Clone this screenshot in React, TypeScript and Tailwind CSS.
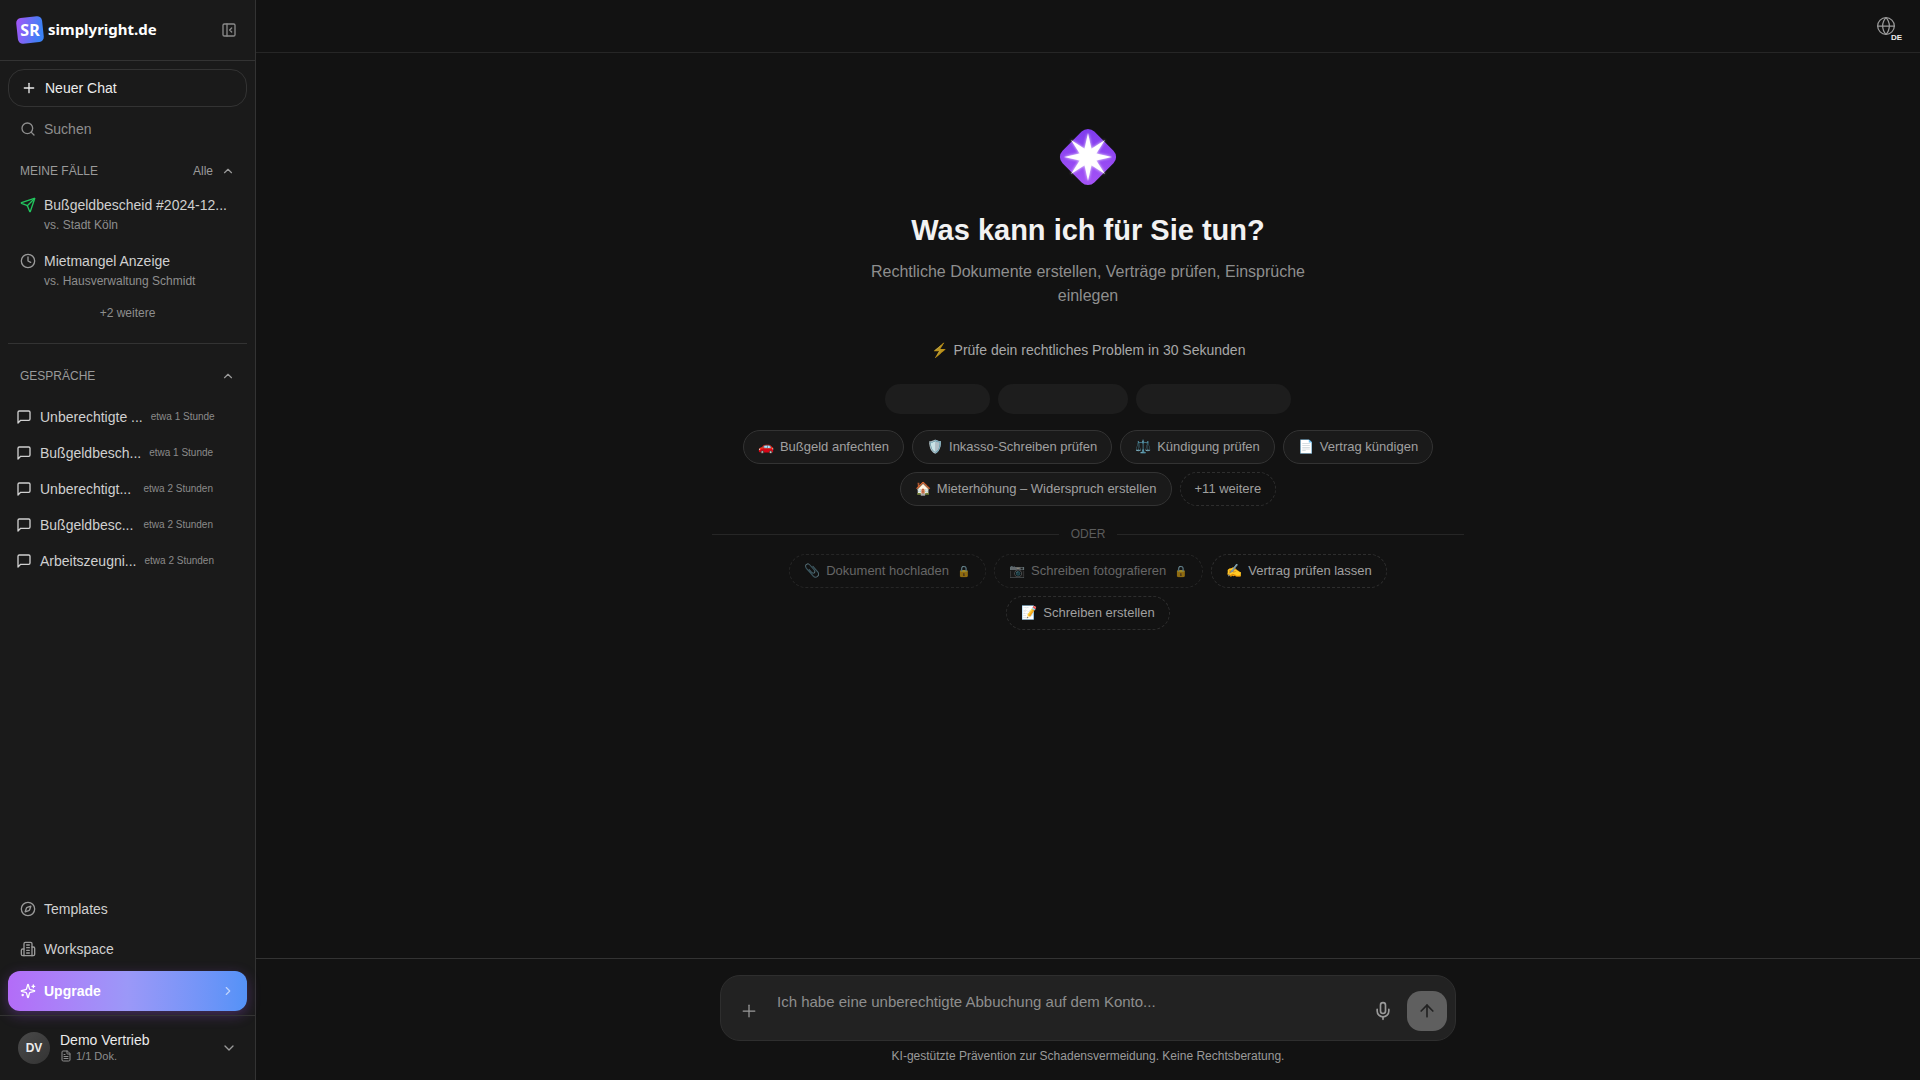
import React from 'react'
import {
  ArrowUp,
  ChevronDown,
  ChevronRight,
  ChevronUp,
  Clock,
  Compass,
  FileText,
  Globe,
  Mic,
  PanelLeftClose,
  Plus,
  Search,
  Send,
} from 'lucide-react'

const chats = [
  { title: 'Unberechtigte ...', time: 'etwa 1 Stunde' },
  { title: 'Bußgeldbesch...', time: 'etwa 1 Stunde' },
  { title: 'Unberechtigt...', time: 'etwa 2 Stunden' },
  { title: 'Bußgeldbesc...', time: 'etwa 2 Stunden' },
  { title: 'Arbeitszeugni...', time: 'etwa 2 Stunden' },
]

const topics = [
  { icon: '🚗', label: 'Bußgeld anfechten' },
  { icon: '🛡️', label: 'Inkasso-Schreiben prüfen' },
  { icon: '⚖️', label: 'Kündigung prüfen' },
  { icon: '📄', label: 'Vertrag kündigen' },
  { icon: '🏠', label: 'Mieterhöhung – Widerspruch erstellen' },
]

const actions = [
  { icon: '📎', label: 'Dokument hochladen', locked: true },
  { icon: '📷', label: 'Schreiben fotografieren', locked: true },
  { icon: '✍️', label: 'Vertrag prüfen lassen', locked: false },
  { icon: '📝', label: 'Schreiben erstellen', locked: false },
]

function Brand() {
  return (
    <a href="#" className="flex items-center gap-[3px] text-white" aria-label="simplyright.de">
      <svg width="30" height="30" viewBox="0 0 30 30" aria-hidden="true">
        <defs>
          <linearGradient id="tile" x1="0" y1="0" x2="1" y2="0.3">
            <stop offset="0" stopColor="#a855f7" />
            <stop offset="1" stopColor="#3b82f6" />
          </linearGradient>
        </defs>
        <rect x="2" y="2" width="26" height="26" rx="5" fill="url(#tile)" transform="rotate(-6 15 15)" />
        <text x="15" y="21" textAnchor="middle" fontFamily="'Noto Sans', sans-serif" fontWeight="700" fontSize="16" fill="#fff">
          SR
        </text>
      </svg>
      <span className="pb-0.5 font-['Noto_Sans',sans-serif] text-[15px] leading-7 font-bold">simplyright.de</span>
    </a>
  )
}

function Stroke({ d, size = 16, className }: { d: string[]; size?: number; className?: string }) {
  return (
    <svg
      width={size}
      height={size}
      viewBox="0 0 24 24"
      fill="none"
      stroke="currentColor"
      strokeWidth="2"
      strokeLinecap="round"
      strokeLinejoin="round"
      className={className}
      aria-hidden="true"
    >
      {d.map((p) => (
        <path key={p} d={p} />
      ))}
    </svg>
  )
}

const sparkles = [
  'M9.937 15.5A2 2 0 0 0 8.5 14.063l-6.135-1.582a.5.5 0 0 1 0-.962L8.5 9.936A2 2 0 0 0 9.937 8.5l1.582-6.135a.5.5 0 0 1 .963 0L14.063 8.5A2 2 0 0 0 15.5 9.937l6.135 1.581a.5.5 0 0 1 0 .964L15.5 14.063a2 2 0 0 0-1.437 1.437l-1.582 6.135a.5.5 0 0 1-.963 0z',
  'M20 3v4',
  'M22 5h-4',
  'M4 17v2',
  'M5 18H3',
]
const speech = ['M21 15a2 2 0 0 1-2 2H7l-4 4V5a2 2 0 0 1 2-2h14a2 2 0 0 1 2 2z']
const building = [
  'M6 22V4a2 2 0 0 1 2-2h8a2 2 0 0 1 2 2v18Z',
  'M6 12H4a2 2 0 0 0-2 2v6a2 2 0 0 0 2 2h2',
  'M18 9h2a2 2 0 0 1 2 2v9a2 2 0 0 1-2 2h-2',
  'M10 6h4',
  'M10 10h4',
  'M10 14h4',
  'M10 18h4',
]

function StarEmblem() {
  const points = Array.from({ length: 16 }, (_, i) => {
    const r = i % 2 === 0 ? 24 : 9
    const a = (i * Math.PI) / 8
    return `${32 + r * Math.sin(a)},${32 - r * Math.cos(a)}`
  }).join(' ')
  return (
    <svg width="64" height="64" viewBox="0 0 64 64" aria-hidden="true">
      <defs>
        <linearGradient id="gem" x1="0" y1="0" x2="1" y2="1">
          <stop offset="0" stopColor="#7c3aed" />
          <stop offset="1" stopColor="#a855f7" />
        </linearGradient>
        <filter id="glow" x="-30%" y="-30%" width="160%" height="160%">
          <feGaussianBlur stdDeviation="1.6" />
        </filter>
      </defs>
      <rect x="9.5" y="9.5" width="45" height="45" rx="9" fill="url(#gem)" transform="rotate(45 32 32)" />
      <polygon points={points} fill="#fff" opacity="0.9" filter="url(#glow)" />
      <polygon points={points} fill="#fff" />
    </svg>
  )
}

function Sidebar() {
  return (
    <aside className="flex w-64 shrink-0 flex-col border-r border-[#333] bg-[#1a1a1a]">
      <div className="flex h-[61px] shrink-0 items-center justify-between border-b border-[#333] pr-[18px] pl-[15px]">
        <Brand />
        <button type="button" aria-label="Seitenleiste schließen" className="text-[#8a8a8a]">
          <PanelLeftClose size={16} />
        </button>
      </div>

      <div className="flex flex-col px-2 pt-2">
        <button type="button" className="flex h-[38px] items-center gap-2 rounded-2xl border border-[#333] px-3 text-sm text-[#ececec]">
          <Plus size={16} />
          Neuer Chat
        </button>
        <button type="button" className="mt-1 flex h-9 items-center gap-2 px-3 text-sm text-[#8e8e8e]">
          <Search size={16} />
          Suchen
        </button>
      </div>

      <section className="mx-2 mt-3 flex flex-col border-b border-[#333] pb-[18px]">
        <div className="flex h-6 items-center px-3 text-xs text-[#9a9a9a]">
          <h2>MEINE FÄLLE</h2>
          <a href="#" className="ml-auto">Alle</a>
          <button type="button" aria-label="Meine Fälle einklappen" className="ml-2">
            <ChevronUp size={14} />
          </button>
        </div>
        <a href="#" className="mt-1 flex h-14 gap-2 px-3 pt-2">
          <Send size={16} className="mt-0.5 shrink-0 text-[#22c55e]" />
          <span className="flex min-w-0 flex-col">
            <span className="text-sm whitespace-nowrap text-[#d0d0d0]">Bußgeldbescheid #2024-12...</span>
            <span className="text-xs leading-5 text-[#8e8e8e]">vs. Stadt Köln</span>
          </span>
        </a>
        <a href="#" className="flex h-14 gap-2 px-3 pt-2">
          <Clock size={16} className="mt-0.5 shrink-0 text-[#9a9a9a]" />
          <span className="flex min-w-0 flex-col">
            <span className="text-sm whitespace-nowrap text-[#d0d0d0]">Mietmangel Anzeige</span>
            <span className="text-xs leading-5 text-[#8e8e8e]">vs. Hausverwaltung Schmidt</span>
          </span>
        </a>
        <button type="button" className="mt-0.5 h-6 self-center text-xs text-[#8e8e8e]">+2 weitere</button>
      </section>

      <section className="flex grow flex-col px-2 pt-5">
        <div className="flex h-6 items-center justify-between px-3 text-xs text-[#9a9a9a]">
          <h2>GESPRÄCHE</h2>
          <button type="button" aria-label="Gespräche einklappen">
            <ChevronUp size={14} />
          </button>
        </div>
        <ul className="mt-[11px] flex flex-col">
          {chats.map((c, i) => (
            <li key={i}>
              <a href="#" className="flex h-9 items-center gap-2 pr-[34px] pl-2 text-sm whitespace-nowrap text-[#d0d0d0]">
                <Stroke d={speech} className="shrink-0" />
                {c.title}
                <time className="ml-auto text-[10px] text-[#8a8a8a]">{c.time}</time>
              </a>
            </li>
          ))}
        </ul>
      </section>

      <nav className="flex flex-col px-2 pb-1 text-sm text-[#d0d0d0]">
        <a href="#" className="flex h-10 items-center gap-2 px-3">
          <Compass size={16} className="text-[#9a9a9a]" />
          Templates
        </a>
        <a href="#" className="flex h-10 items-center gap-2 px-3">
          <Stroke d={building} className="text-[#9a9a9a]" />
          Workspace
        </a>
        <a href="#" className="mt-0.5 flex h-10 items-center gap-2 rounded-xl bg-linear-to-r from-[#b36cf8] via-[#9b98f8] to-[#5492f7] px-3 font-semibold text-white shadow-[0_4px_14px_rgba(168,85,247,0.3)]">
          <Stroke d={sparkles} />
          Upgrade
          <ChevronRight size={14} className="ml-auto opacity-60" />
        </a>
      </nav>

      <button type="button" className="flex h-[65px] shrink-0 items-center border-t border-[#333] pr-[18px] pl-[18px] text-left">
        <span className="flex size-8 items-center justify-center rounded-full bg-linear-to-br from-[#4a4a4a] to-[#333] text-xs font-bold text-[#ececec]">DV</span>
        <span className="ml-2.5 flex flex-col">
          <span className="text-sm leading-4 text-[#ececec]">Demo Vertrieb</span>
          <span className="flex items-center gap-1 text-[11px] leading-4 text-[#8e8e8e]">
            <FileText size={12} />
            1/1 Dok.
          </span>
        </span>
        <ChevronDown size={16} className="ml-auto text-[#9a9a9a]" />
      </button>
    </aside>
  )
}

function Welcome() {
  return (
    <main className="flex grow flex-col items-center px-6 pt-[72px]">
      <StarEmblem />
      <h1 className="mt-[23px] text-[29px] leading-9 font-bold text-[#f2f2f2]">Was kann ich für Sie tun?</h1>
      <p className="mt-3 max-w-[460px] text-center text-base text-[#8e8e8e]">
        Rechtliche Dokumente erstellen, Verträge prüfen, Einsprüche einlegen
      </p>
      <p className="mt-8 text-sm text-[#a8a8a8]">
        <span className="mr-1.5 opacity-70">⚡</span>
        Prüfe dein rechtliches Problem in 30 Sekunden
      </p>
      <div className="mt-6 flex gap-2">
        <span className="h-[30px] w-[105px] rounded-full bg-[#1d1d1d]" />
        <span className="h-[30px] w-[130px] rounded-full bg-[#1d1d1d]" />
        <span className="h-[30px] w-[155px] rounded-full bg-[#1d1d1d]" />
      </div>
      <div className="mt-4 flex max-w-[752px] flex-wrap justify-center gap-2 text-[13px] text-[#a0a0a0]">
        {topics.map((t) => (
          <button key={t.label} type="button" className="flex h-[34px] items-center gap-1.5 rounded-full border border-[#333] bg-[#1a1a1a] px-3.5">
            <span>{t.icon}</span>
            {t.label}
          </button>
        ))}
        <button type="button" className="h-[34px] rounded-full border border-dashed border-[#2e2e2e] px-3.5">+11 weitere</button>
      </div>
      <div className="mt-5 flex w-full max-w-[752px] items-center gap-3 text-xs text-[#5c5c5c]">
        <span className="h-px grow bg-[#262626]" />
        ODER
        <span className="h-px grow bg-[#262626]" />
      </div>
      <div className="mt-3 flex max-w-[640px] flex-wrap justify-center gap-2 text-[13px] text-[#a0a0a0]">
        {actions.map((a) => (
          <button
            key={a.label}
            type="button"
            disabled={a.locked}
            className="flex h-[34px] items-center gap-1.5 rounded-full border border-dashed border-[#2e2e2e] px-3.5 disabled:border-[#262626] disabled:text-[#666]"
          >
            <span className={a.locked ? 'opacity-50' : undefined}>{a.icon}</span>
            {a.label}
            {a.locked && <span className="ml-0.5 text-[11px] opacity-60">🔒</span>}
          </button>
        ))}
      </div>
    </main>
  )
}

function Composer() {
  return (
    <footer className="flex flex-col items-center border-t border-[#333] px-6 pt-4 pb-4">
      <form className="flex h-[66px] w-full max-w-[736px] items-center rounded-[20px] border border-[#2e2e2e] bg-[#222] pr-2 pl-[18px]">
        <button type="button" aria-label="Anhang hinzufügen" className="mt-1.5 text-[#9a9a9a]">
          <Plus size={20} strokeWidth={1.5} />
        </button>
        <textarea
          rows={1}
          aria-label="Nachricht"
          placeholder="Ich habe eine unberechtigte Abbuchung auf dem Konto..."
          className="mb-3 ml-[18px] h-6 grow resize-none text-[15px] leading-6 text-white outline-none placeholder:text-[#8e8e8e]"
        />
        <button type="button" aria-label="Spracheingabe" className="mt-1.5 mr-3.5 text-[#9a9a9a]">
          <Mic size={20} />
        </button>
        <button type="submit" aria-label="Senden" className="mt-1.5 flex size-10 items-center justify-center rounded-[14px] bg-[#5f5f5f] text-[#222]">
          <ArrowUp size={20} />
        </button>
      </form>
      <p className="mt-[7px] text-xs text-[#9a9a9a]">KI-gestützte Prävention zur Schadensvermeidung. Keine Rechtsberatung.</p>
    </footer>
  )
}

export default function App() {
  return (
    <div className="flex min-h-screen bg-[#121212] font-['Liberation_Sans',sans-serif]">
      <Sidebar />
      <div className="flex min-w-0 grow flex-col">
        <header className="flex h-[53px] shrink-0 items-center justify-end border-b border-[#262626] pr-6">
          <button type="button" aria-label="Sprache" className="relative text-[#9a9a9a]">
            <Globe size={20} strokeWidth={1.5} />
            <span className="absolute -right-1.5 -bottom-1.5 text-[8px] leading-none font-bold text-[#ececec]">DE</span>
          </button>
        </header>
        <Welcome />
        <Composer />
      </div>
    </div>
  )
}
